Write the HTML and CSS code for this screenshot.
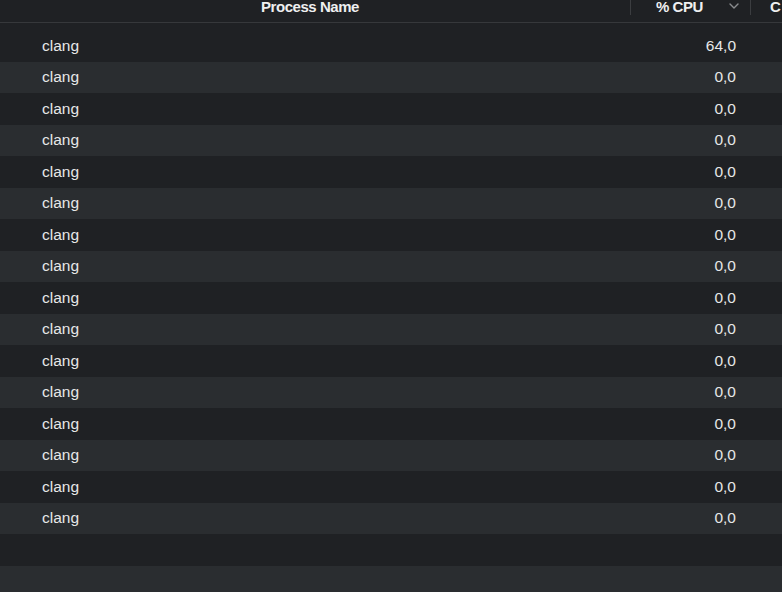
FILE: index.html
```html
<!DOCTYPE html>
<html>
<head>
<meta charset="utf-8">
<link rel="stylesheet" href="styles.css">
</head>
<body>
<div class="table">
  <div class="header">
    <div class="hcol hname"><span class="hlabel">Process Name</span></div>
    <div class="hcol hcpu"><span class="hlabel">% CPU</span>
      <svg class="chev" width="10" height="6" viewBox="0 0 10 6"><path d="M1 1 L5 5 L9 1" fill="none" stroke="#8a8c8f" stroke-width="1.4" stroke-linecap="round" stroke-linejoin="round"/></svg>
    </div>
    <div class="hcol hmore"><span class="hlabel">C</span></div>
  </div>
  <div class="rows">
    <div class="row"><span class="name">clang</span><span class="cpu">64,0</span></div>
    <div class="row"><span class="name">clang</span><span class="cpu">0,0</span></div>
    <div class="row"><span class="name">clang</span><span class="cpu">0,0</span></div>
    <div class="row"><span class="name">clang</span><span class="cpu">0,0</span></div>
    <div class="row"><span class="name">clang</span><span class="cpu">0,0</span></div>
    <div class="row"><span class="name">clang</span><span class="cpu">0,0</span></div>
    <div class="row"><span class="name">clang</span><span class="cpu">0,0</span></div>
    <div class="row"><span class="name">clang</span><span class="cpu">0,0</span></div>
    <div class="row"><span class="name">clang</span><span class="cpu">0,0</span></div>
    <div class="row"><span class="name">clang</span><span class="cpu">0,0</span></div>
    <div class="row"><span class="name">clang</span><span class="cpu">0,0</span></div>
    <div class="row"><span class="name">clang</span><span class="cpu">0,0</span></div>
    <div class="row"><span class="name">clang</span><span class="cpu">0,0</span></div>
    <div class="row"><span class="name">clang</span><span class="cpu">0,0</span></div>
    <div class="row"><span class="name">clang</span><span class="cpu">0,0</span></div>
    <div class="row"><span class="name">clang</span><span class="cpu">0,0</span></div>
    <div class="row"></div>
    <div class="row"></div>
  </div>
</div>
</body>
</html>
```
FILE: styles.css
```css
html, body {
  margin: 0;
  padding: 0;
  background: #1f2124;
  overflow: hidden;
}
body {
  width: 782px;
  height: 592px;
  font-family: "Liberation Sans", Arial, sans-serif;
  color: #e6e7e8;
}
.table {
  display: flex;
  flex-direction: column;
}
.header {
  display: flex;
  height: 22px;
  border-bottom: 1px solid #36383b;
  background: #1f2124;
}
.hcol {
  display: flex;
  align-items: flex-start;
  height: 22px;
}
.hlabel {
  font-size: 15px;
  line-height: 15px;
  font-weight: bold;
  letter-spacing: -0.45px;
  color: #eeeff0;
  margin-top: -1px;
}
.hname {
  width: 630px;
  justify-content: center;
  padding-right: 10px;
  box-sizing: border-box;
}
.hcpu {
  width: 121px;
  box-sizing: border-box;
  border-left: 1px solid #3b3d40;
  border-right: 1px solid #3b3d40;
  height: 15px;
  padding-left: 25px;
}
.chev {
  margin-left: 26px;
  margin-top: 3px;
}
.hmore {
  padding-left: 19px;
}
.rows {
  padding-top: 7px;
  display: flex;
  flex-direction: column;
}
.row {
  height: 31.5px;
  display: flex;
  align-items: center;
  font-size: 15.5px;
  background: #1f2124;
}
.row:nth-child(even) {
  background: #2a2d30;
}
.name {
  width: 594px;
  padding-left: 42px;
}
.cpu {
  width: 100px;
  text-align: right;
}
```
